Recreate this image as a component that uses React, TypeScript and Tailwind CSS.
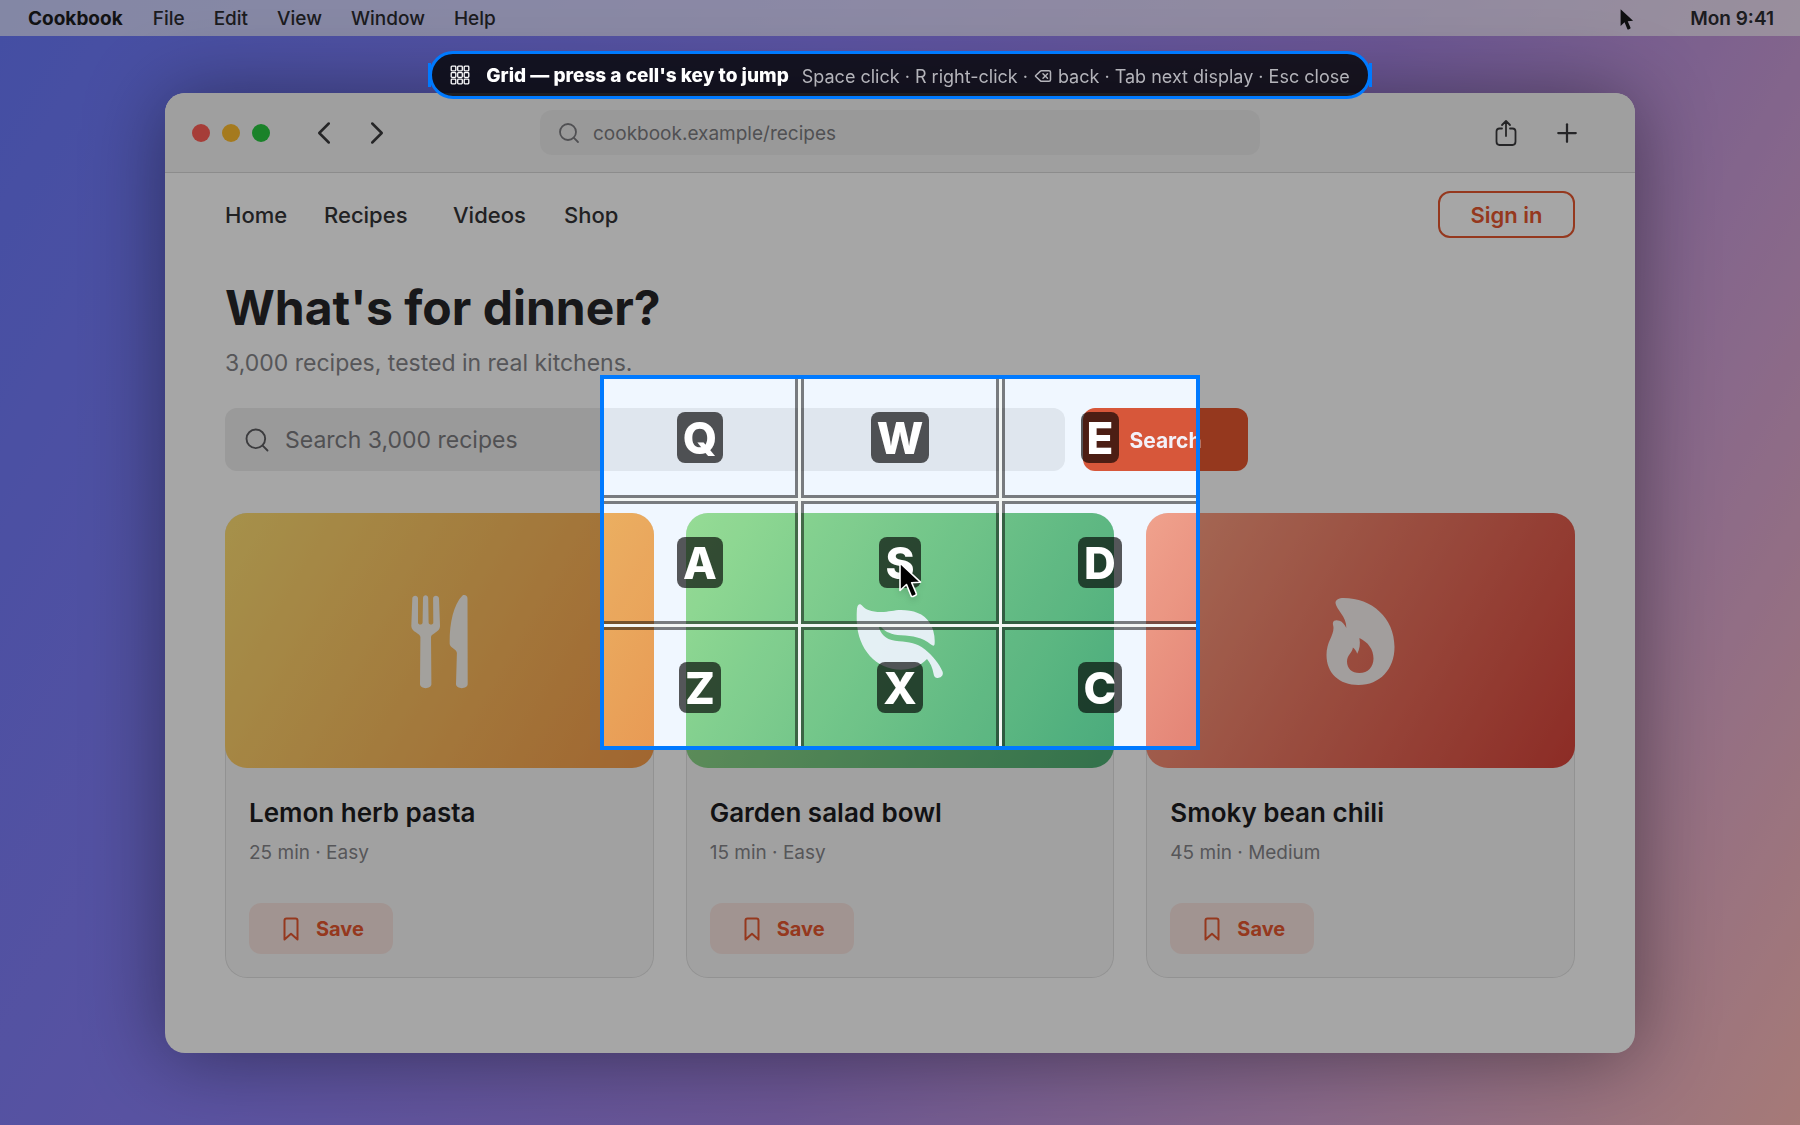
import { ChevronLeft, ChevronRight, Delete, Plus, Search } from "lucide-react";

const MENUS = ["File", "Edit", "View", "Window", "Help"];

const NAV = [
  { label: "Home", width: "w-[99px]" },
  { label: "Recipes", width: "w-[129px]" },
  { label: "Videos", width: "w-[111px]" },
  { label: "Shop", width: "w-[72px]" },
];

const CELLS = [
  { key: "Q", place: "col-start-1 row-start-1 border-r-3 border-b-3" },
  { key: "W", place: "col-start-3 row-start-1 border-x-3 border-b-3" },
  { key: "E", place: "col-start-5 row-start-1 border-l-3 border-b-3" },
  { key: "A", place: "col-start-1 row-start-3 border-r-3 border-y-3" },
  { key: "S", place: "col-start-3 row-start-3 border-3" },
  { key: "D", place: "col-start-5 row-start-3 border-l-3 border-y-3" },
  { key: "Z", place: "col-start-1 row-start-5 border-r-3 border-t-3" },
  { key: "X", place: "col-start-3 row-start-5 border-x-3 border-t-3" },
  { key: "C", place: "col-start-5 row-start-5 border-l-3 border-t-3" },
];

function ForkKnife() {
  return (
    <svg width="58" height="94" viewBox="0 0 58 94" fill="currentColor" aria-hidden="true">
      <path d="M2.3 3.5C2.5-.2 8-.2 8 3.5V27.500C8 30.300 12.500 30.300 12.600 27.500L13 3C13.200-.8 18-.8 18.200 3L18.600 27.500C18.700 30.300 23.300 30.300 23.300 27.500L23.100 3.500C23.100-.2 28.700-.2 29 3.500L30 31C30.200 37 21 38.500 21 42L21.400 89C21.400 94.500 10 94.500 10 89L10.400 42C10.400 38.500 1.200 37 1.300 31Z" />
      <path d="M52.500.5C55-.6 57.500.8 57.500 3.500L57.700 89C57.700 94.500 46 94.500 46 89L46.900 58C46.900 54 39.900 53 39.700 49C39.300 30 43 10 52.500.5Z" />
    </svg>
  );
}

function Leaf() {
  return (
    <svg width="87" height="75" viewBox="0 0 87 75" fill="currentColor" aria-hidden="true">
      <path d="M1 4.500C1.800 0 4-.8 6.500 2C9.500 5.500 15 8 25 8C33 8 38 6 45 6C57 6 68 9.500 73.500 18.500C77 24 79 31 78.700 38.500C78.700 42 77.500 42.500 75 40.500C66 33 57 32 45 31.200C35 30.600 30 28 26 24C23.500 21.500 22.500 22.500 23.500 25C26 32 32 36.500 43 37.300C53 38 61 39 69 45.500C77 52 83 59.500 86.500 67.500C88 71.500 84.500 74.500 81 74C78.500 73.500 78 72 77.500 69.500C76.500 63.500 74 58.500 71 55C64 62.500 55 65.700 45 65.700C20 65.700 2 45 .8 18C.6 13 .7 8 1 4.500Z" />
    </svg>
  );
}

function Flame() {
  return (
    <svg width="69" height="87" viewBox="0 0 69 87" fill="currentColor" fillRule="evenodd" aria-hidden="true">
      <path d="M9.500 5C9.500 1.500 13 0 17.500 0C46 0 68.500 20 68.500 49C68.500 71 54 87 32.500 87C13 87 .5 75 .5 57C.5 44 7.500 38 7.500 30C7.500 27.500 6.500 26.500 7 24.500C7.600 22 10.500 21.800 13.500 22.700C16.500 23.700 18.500 26.500 20.300 30C21 19 10 11 9.500 5ZM33.400 40C42 44 47.500 51.500 47.500 60.500C47.500 69 42 75 33.400 75C26 75 21 70.500 21 63.500C21 57 26.500 54.500 26.900 49.500C29 51 30.300 53 31.200 55.700C33.600 51.500 34.500 46 33.400 40Z" />
    </svg>
  );
}

function ShareIcon() {
  return (
    <svg width="22" height="28" viewBox="0 0 22 28" fill="none" stroke="currentColor" strokeWidth="1.800" strokeLinecap="round" strokeLinejoin="round" aria-hidden="true">
      <path d="M7 9.500H4.500Q1.500 9.500 1.500 12.500V22.500Q1.500 26 4.500 26H17.500Q20.500 26 20.500 22.500V12.500Q20.500 9.500 17.500 9.500H15M11 17V2.500M7 6L11 2L15 6" />
    </svg>
  );
}

function BookmarkIcon() {
  return (
    <svg width="16" height="24" viewBox="0 0 16 24" fill="none" stroke="currentColor" strokeWidth="2" strokeLinejoin="round" aria-hidden="true">
      <path d="M1.500 3.500Q1.500 1.500 3.500 1.500H12.500Q14.500 1.500 14.500 3.500V22.500L8 16.800L1.500 22.500Z" />
    </svg>
  );
}

function GridIcon() {
  return (
    <svg width="20" height="20" viewBox="0 0 20 20" fill="none" stroke="currentColor" strokeWidth="1.300" aria-hidden="true">
      {[1.2, 7.7, 14.2].map((y) =>
        [1.2, 7.7, 14.2].map((x) => <rect key={`${x}-${y}`} x={x} y={y} width="4.600" height="4.600" rx="0.8" />),
      )}
    </svg>
  );
}

const ARROW = "M2 2V29.500L8.500 23.500L13 34.500Q13.500 36 15 35.400L17.500 34.300Q18.800 33.600 18.200 32.300L13.700 21.700L22.500 21.200Z";

const RECIPES = [
  { title: "Lemon herb pasta", meta: "25 min · Easy", Icon: ForkKnife, art: "bg-[linear-gradient(120deg,#ffdf73,#f79c4a)]" },
  { title: "Garden salad bowl", meta: "15 min · Easy", Icon: Leaf, art: "bg-[linear-gradient(120deg,#a0e38f,#4eae74)]" },
  { title: "Smoky bean chili", meta: "45 min · Medium", Icon: Flame, art: "bg-[linear-gradient(120deg,#ffa586,#d8443a)]" },
];

function MenuBar() {
  return (
    <header className="flex h-9 shrink-0 items-center bg-white/65 pt-[3px] pr-[26px] pl-7 text-[19px] text-[#2b2b30]">
      <span className="mr-[30px] font-bold text-[#1c1c20]">Cookbook</span>
      <nav aria-label="Menu bar" className="flex gap-[29px]">
        {MENUS.map((m) => (
          <button key={m} type="button" className="font-medium">{m}</button>
        ))}
      </nav>
      <svg className="mr-[56px] ml-auto" width="14" height="23" viewBox="1 1 23 36" fill="#18181b" aria-hidden="true">
        <path d={ARROW} />
      </svg>
      <time className="font-semibold">Mon 9:41</time>
    </header>
  );
}

function Toolbar() {
  return (
    <div className="grid h-20 shrink-0 grid-cols-[1fr_720px_1fr] items-center border-b border-black/12 bg-[#f5f5f5] px-[27px] text-[#3a3a3c]">
      <div className="flex items-center gap-3">
        <button type="button" aria-label="Close" className="size-[18px] rounded-full bg-[#ff5f57]" />
        <button type="button" aria-label="Minimise" className="size-[18px] rounded-full bg-[#febc2e]" />
        <button type="button" aria-label="Zoom" className="size-[18px] rounded-full bg-[#28c840]" />
        <button type="button" aria-label="Back" className="ml-[27px]"><ChevronLeft size={38} strokeWidth={1.6} className="-mx-1" /></button>
        <button type="button" aria-label="Forward" className="ml-[11px]"><ChevronRight size={38} strokeWidth={1.6} className="-mx-1" /></button>
      </div>
      <label className="flex h-[45px] items-center gap-3 rounded-xl bg-[#ececec] px-[17px] text-[#7c7c80]">
        <Search size={24} strokeWidth={1.8} className="shrink-0" />
        <input aria-label="Address" defaultValue="cookbook.example/recipes" className="w-full bg-transparent pt-[3px] text-[19px] outline-none" />
      </label>
      <div className="flex items-center justify-end gap-[35px] pr-[26px]">
        <button type="button" aria-label="Share"><ShareIcon /></button>
        <button type="button" aria-label="New tab"><Plus size={30} strokeWidth={1.8} /></button>
      </div>
    </div>
  );
}

function Page() {
  return (
    <main className="flex flex-col px-[60px] pt-[18px]">
      <div className="flex items-center justify-between">
        <nav aria-label="Site" className="flex pt-[2px] text-[22px] font-medium text-[#333336]">
          {NAV.map((n) => (
            <a key={n.label} href="#" className={n.width}>{n.label}</a>
          ))}
        </nav>
        <button type="button" className="h-[47px] w-[137px] rounded-xl border-2 border-[#e5562e] pt-[2px] text-[22px] font-semibold text-[#e5562e]">Sign in</button>
      </div>
      <h1 className="mt-[38px] text-[48px] leading-[64px] font-bold text-[#262629]">What's for dinner?</h1>
      <p className="mt-2 text-[23px] leading-[30px] text-[#858589]">3,000 recipes, tested in real kitchens.</p>
      <form className="mt-[30px] flex gap-[18px]" onSubmit={(e) => e.preventDefault()}>
        <label className="flex h-[63px] w-[840px] items-center gap-[14px] rounded-xl bg-[#ededed] px-[18px] text-[#6e6e73]">
          <Search size={28} strokeWidth={1.6} className="shrink-0 text-[#5c5c60]" />
          <input aria-label="Search recipes" placeholder="Search 3,000 recipes" className="w-full bg-transparent pt-[2px] text-[23px] outline-none placeholder:text-[#7c7c80]" />
        </label>
        <button type="submit" className="w-[165px] rounded-xl bg-[#e5562e] pt-[2px] text-[21px] font-bold text-[#f3f1f8]">
          <span className="relative z-20">Search</span>
        </button>
      </form>
      <div className="mt-[42px] grid grid-cols-3 gap-8">
        {RECIPES.map(({ title, meta, Icon, art }) => (
          <article key={title} className="rounded-[22px] bg-[#f8f8f8] shadow-[inset_0_0_0_1px_rgba(0,0,0,0.09)]">
            <div className={`flex h-[255px] items-center justify-center rounded-[22px] pt-[2px] text-[#fafafa]/95 ${art}`}>
              <Icon />
            </div>
            <div className="px-6 pt-[28px] pb-6">
              <h2 className="text-[26px] leading-[34px] font-semibold text-[#1d1d1f]">{title}</h2>
              <p className="mt-[11px] text-[19px] leading-6 text-[#858589]">{meta}</p>
              <button type="button" className="mt-[38px] flex h-[51px] w-36 items-center gap-[17px] rounded-xl bg-[#f7e4df] pl-[34px] text-[20px] font-bold text-[#e5562e]">
                <BookmarkIcon />
                Save
              </button>
            </div>
          </article>
        ))}
      </div>
    </main>
  );
}

function GridOverlay() {
  return (
    <>
      <div className="fixed inset-0 z-10 flex items-center justify-center overflow-hidden">
        <div className="relative grid h-1/3 w-1/3 grid-cols-[1fr_3px_1fr_3px_1fr] grid-rows-[1fr_3px_1fr_3px_1fr] bg-[#007aff]/6 shadow-[0_0_0_2000px_rgba(0,0,0,0.35)]">
          {CELLS.map((c) => (
            <button key={c.key} type="button" className={`border-black/50 ${c.place}`} aria-label={`Jump to cell ${c.key}`} />
          ))}
          <div className="col-start-2 row-span-full row-start-1 bg-[#f3f6f4]" />
          <div className="col-start-4 row-span-full row-start-1 bg-[#f3f6f4]" />
          <div className="col-span-full col-start-1 row-start-2 bg-[#f3f6f4]" />
          <div className="col-span-full col-start-1 row-start-4 bg-[#f3f6f4]" />
          <div className="pointer-events-none absolute inset-0 grid grid-cols-3 grid-rows-3 place-items-center">
            {CELLS.map((c) => (
              <kbd key={c.key} className="rounded-lg bg-black/65 px-1.5 pt-[2px] font-[Inter] text-[44px] leading-[49px] font-extrabold text-white">{c.key}</kbd>
            ))}
          </div>
        </div>
      </div>
      <div className="pointer-events-none fixed inset-0 z-30 flex items-center justify-center">
        <div className="relative h-1/3 w-1/3 border-4 border-[#007aff]">
          <svg className="absolute top-1/2 left-1/2 -mt-[2px] -ml-[2px] drop-shadow-md" width="26" height="39" viewBox="0 0 26 39" fill="#000" stroke="#fff" strokeWidth="1.600" strokeLinejoin="round" aria-hidden="true">
            <path d={ARROW} />
          </svg>
        </div>
      </div>
    </>
  );
}

function HintPill() {
  return (
    <div role="status" className="fixed inset-x-0 top-[51px] z-40 flex justify-center">
      <div className="relative flex h-12 items-center rounded-[24px] border-3 border-[#007aff] bg-[#08080c]/85 px-[18px] text-white">
        <span className="absolute top-[9px] -left-[4px] h-6 w-[3px] bg-[#007aff]" />
        <span className="absolute top-[9px] -right-[4px] h-6 w-[3px] bg-[#007aff]" />
        <GridIcon />
        <strong className="ml-4 pt-[3px] text-[19px] font-extrabold">Grid — press a cell's key to jump</strong>
        <span className="ml-[13px] flex items-center pt-[2px] text-[18px] text-[#b4b4ba]">
          Space click · R right-click ·<Delete size={18} strokeWidth={2} className="mx-1.5" />back · Tab next display · Esc close
        </span>
      </div>
    </div>
  );
}

export default function App() {
  return (
    <div className="flex min-h-screen flex-col bg-[linear-gradient(120deg,#6879fb_0%,#8c80f8_35%,#a685e4_58%,#d4a2d4_80%,#ffbcb8_100%)] font-[Inter,sans-serif]">
      <MenuBar />
      <div className="mx-[165px] mt-[57px] mb-[72px] flex flex-1 flex-col overflow-hidden rounded-[20px] bg-white shadow-[0_4px_80px_rgba(0,0,0,0.42)]">
        <Toolbar />
        <Page />
      </div>
      <GridOverlay />
      <HintPill />
    </div>
  );
}
